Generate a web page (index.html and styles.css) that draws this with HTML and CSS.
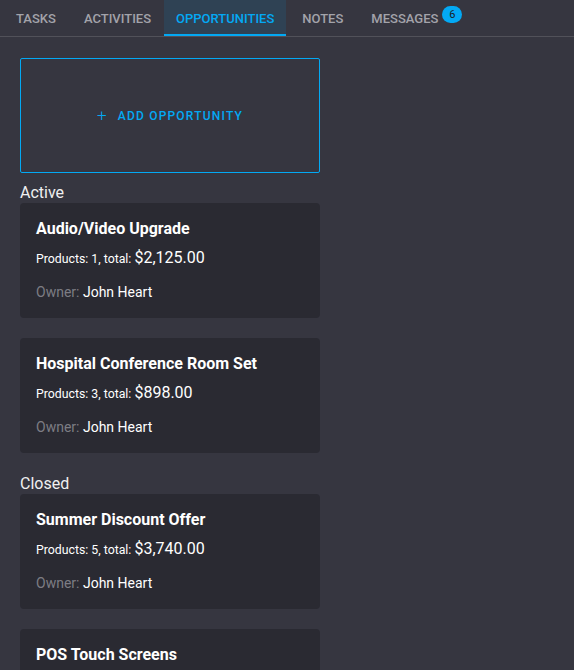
FILE: index.html
```html
<!DOCTYPE html>
<html>
<head>
<meta charset="utf-8">
<link rel="stylesheet" href="styles.css">
</head>
<body>
<nav class="tabs">
  <div class="tab">Tasks</div>
  <div class="tab">Activities</div>
  <div class="tab active">Opportunities</div>
  <div class="tab">Notes</div>
  <div class="tab">Messages<span class="badge">6</span></div>
</nav>
<main class="content">
  <button class="add"><span class="plus">+</span>Add Opportunity</button>
  <div class="label">Active</div>
  <div class="card">
    <div class="title">Audio/Video Upgrade</div>
    <div class="products">Products: 1, total: <span class="amount">$2,125.00</span></div>
    <div class="owner"><span class="muted">Owner:</span> John Heart</div>
  </div>
  <div class="card">
    <div class="title">Hospital Conference Room Set</div>
    <div class="products">Products: 3, total: <span class="amount">$898.00</span></div>
    <div class="owner"><span class="muted">Owner:</span> John Heart</div>
  </div>
  <div class="label label-gap">Closed</div>
  <div class="card">
    <div class="title">Summer Discount Offer</div>
    <div class="products">Products: 5, total: <span class="amount">$3,740.00</span></div>
    <div class="owner"><span class="muted">Owner:</span> John Heart</div>
  </div>
  <div class="card">
    <div class="title">POS Touch Screens</div>
    <div class="products">Products: 2, total: <span class="amount">$1,250.00</span></div>
    <div class="owner"><span class="muted">Owner:</span> John Heart</div>
  </div>
</main>
</body>
</html>
```
FILE: styles.css
```css
html, body {
  margin: 0;
  padding: 0;
  background: #363640;
  font-family: Roboto, "Liberation Sans", sans-serif;
  color: #fff;
  overflow: hidden;
  height: 670px;
}
.tabs {
  display: flex;
  height: 36px;
  border-bottom: 1px solid #515159;
  padding-left: 2px;
}
.tab {
  display: flex;
  align-items: center;
  padding: 2px 12px 0;
  margin: 0 2px;
  font-size: 13px;
  font-weight: 500;
  text-transform: uppercase;
  color: #a3a3aa;
  box-sizing: border-box;
  border-bottom: 2px solid transparent;
}
.tab.active {
  background: #2f4254;
  color: #03a9f4;
  border-bottom-color: #03a9f4;
  margin: 0 2px 0 -1px;
}
.badge {
  display: inline-flex;
  align-items: center;
  justify-content: center;
  background: #03a9f4;
  color: #1c1c24;
  font-size: 11px;
  font-weight: 400;
  min-width: 20px;
  height: 17px;
  border-radius: 9px;
  margin-left: 4px;
  margin-top: -7px;
}
.content {
  padding: 21px 20px 0;
  display: flex;
  flex-direction: column;
  width: 300px;
}
.add {
  height: 115px;
  background: transparent;
  border: 1px solid #03a9f4;
  border-radius: 2px;
  color: #03a9f4;
  font-family: inherit;
  font-size: 12px;
  font-weight: 500;
  letter-spacing: 1.2px;
  text-transform: uppercase;
  display: flex;
  align-items: center;
  justify-content: center;
  padding: 0;
  margin-bottom: 10px;
}
.plus {
  font-size: 17px;
  font-weight: 300;
  margin-right: 10px;
  margin-top: -2px;
}
.label {
  font-size: 16px;
  line-height: 20px;
  color: #f0f0f0;
}
.label-gap {
  margin-top: 1px;
}
.card {
  background: #2a2a32;
  border-radius: 4px;
  padding: 16px 16px 15px;
  margin-bottom: 20px;
  height: 115px;
  box-sizing: border-box;
}
.title {
  font-size: 16px;
  font-weight: 700;
  line-height: 20px;
}
.products {
  font-size: 12.3px;
  line-height: 20px;
  margin-top: 9px;
}
.amount {
  font-size: 16px;
}
.owner {
  font-size: 14px;
  line-height: 20px;
  margin-top: 13px;
}
.muted {
  color: #7d7d84;
}
```
